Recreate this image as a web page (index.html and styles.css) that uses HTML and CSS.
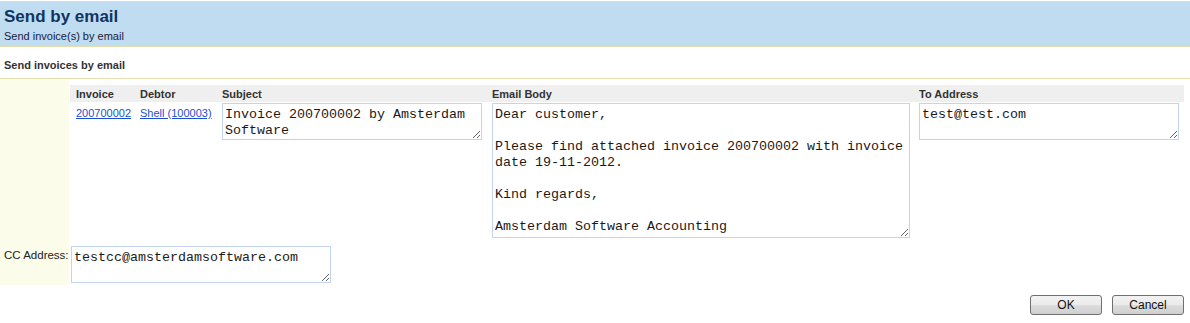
FILE: index.html
```html
<!DOCTYPE html>
<html lang="en">
<head>
  <meta charset="UTF-8">
  <title>Send by email</title>
  <link rel="stylesheet" href="styles.css">
</head>
<body>
  <header class="page-header">
    <h1>Send by email</h1>
    <div class="subtitle">Send invoice(s) by email</div>
  </header>

  <h2 class="section-title">Send invoices by email</h2>

  <form class="mail-form">
    <div class="label-cell"></div>
    <div class="invoice-table">
      <div class="th">Invoice</div>
      <div class="th">Debtor</div>
      <div class="th">Subject</div>
      <div class="th">Email Body</div>
      <div class="th">To Address</div>

      <div class="td"><a href="#">200700002</a></div>
      <div class="td"><a href="#">Shell (100003)</a></div>
      <div class="td field"><textarea class="small">Invoice 200700002 by Amsterdam Software</textarea></div>
      <div class="td field"><textarea class="body">Dear customer,

Please find attached invoice 200700002 with invoice date 19-11-2012.

Kind regards,

Amsterdam Software Accounting</textarea></div>
      <div class="td field"><textarea class="small">test@test.com</textarea></div>
    </div>

    <div class="label-cell cc-label">CC Address:</div>
    <div class="cc-cell"><textarea class="small">testcc@amsterdamsoftware.com</textarea></div>
  </form>

  <div class="actions">
    <button type="button">OK</button>
    <button type="button">Cancel</button>
  </div>
</body>
</html>
```

FILE: styles.css
```css
* {
  box-sizing: border-box;
}
body {
  margin: 0;
  padding-top: 1px;
  font-family: "Liberation Sans", Arial, sans-serif;
  font-size: 11px;
  color: #222;
  background: #ffffff;
}
.page-header {
  background: #c0dcf0;
  border-top: 1px solid #e2deb0;
  border-bottom: 1px solid #e2deb0;
  padding: 5px 4px 4px;
  height: 46px;
}
.page-header h1 {
  margin: 0;
  font-size: 17px;
  line-height: 20px;
  font-weight: 700;
  color: #0f3462;
}
.subtitle {
  margin-top: 3px;
  font-size: 11px;
  line-height: 13px;
  color: #1a1a3a;
}
.section-title {
  margin: 0;
  font-size: 11px;
  font-weight: 700;
  line-height: 13px;
  color: #333;
  padding: 12px 4px 6px;
  border-bottom: 1px solid #e2deb0;
}
.mail-form {
  display: grid;
  grid-template-columns: 70px 1fr;
  margin-right: 6px;
}
.label-cell {
  background: #fcfcea;
  margin-right: 1px;
}
.invoice-table {
  display: grid;
  grid-template-columns: 64px 82px 270px 427px 1fr;
  padding-top: 6px;
}
.th {
  background: #efefef;
  font-weight: 700;
  color: #333;
  padding: 2px 6px 1px;
  line-height: 14px;
  height: 17px;
  white-space: nowrap;
}
.td {
  padding: 4px 6px 0;
  line-height: 14px;
  white-space: nowrap;
}
.td.field {
  padding: 1px 0 0 6px;
}
.td a {
  color: #1c4fd0;
}
textarea {
  display: block;
  font-family: "Liberation Mono", "Courier New", monospace;
  font-size: 13.33px;
  line-height: 16px;
  color: #1a1a1a;
  border: 1px solid #c3d4f2;
  padding: 3px 2px 0;
  margin: 0;
  background: #fff;
}
textarea.small {
  width: 260px;
  height: 37px;
}
textarea.body {
  width: 418px;
  height: 135px;
}
.cc-label {
  padding: 10px 0 0 4px;
  line-height: 14px;
  color: #222;
  font-size: 11.5px;
  white-space: nowrap;
}
.cc-cell {
  padding: 8px 0 2px 1px;
}
.actions {
  display: flex;
  justify-content: flex-end;
  gap: 10px;
  padding: 10px 6px 0;
}
.actions button {
  width: 72px;
  height: 20px;
  font-family: "Liberation Sans", Arial, sans-serif;
  font-size: 12px;
  color: #111;
  border: 1px solid #707070;
  border-radius: 3px;
  background: linear-gradient(to bottom, #f2f2f2 0%, #ebebeb 50%, #dddddd 51%, #cfcfcf 100%);
  padding: 0;
}
```
